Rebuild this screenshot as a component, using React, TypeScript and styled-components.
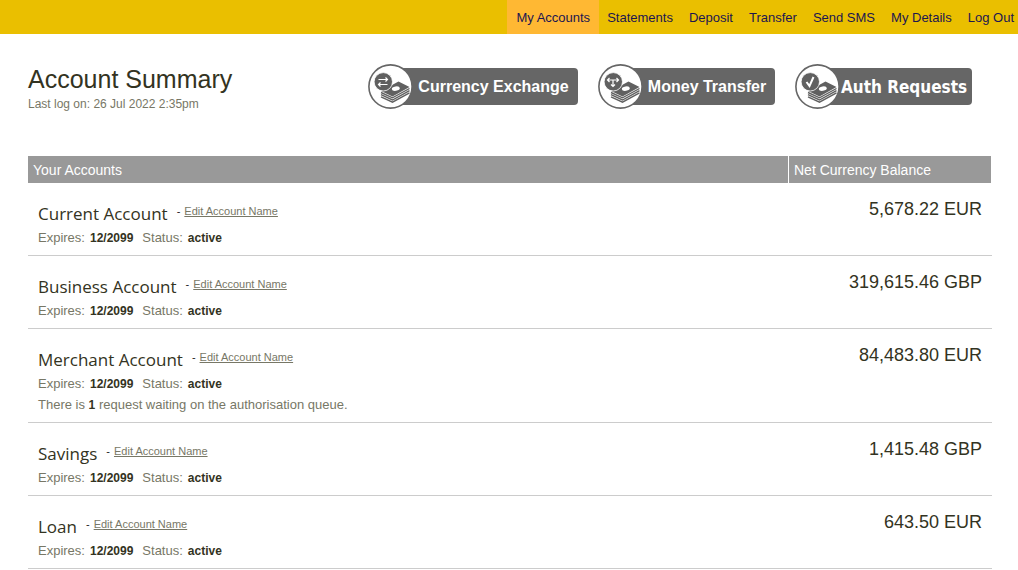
import React from 'react';
import styled, { createGlobalStyle } from 'styled-components';

const GlobalStyle = createGlobalStyle`
  * { box-sizing: border-box; }
  body {
    margin: 0;
    background: #fff;
    color: #333322;
    font-family: "Liberation Sans", Arial, sans-serif;
    font-size: 13px;
  }
`;

const NavBar = styled.nav`
  display: flex;
  justify-content: flex-end;
  height: 34px;
  padding-right: 4px;
  background: #eabf00;
`;

const NavLink = styled.a<{ $active?: boolean; $last?: boolean }>`
  display: flex;
  align-items: center;
  padding: 0 ${p => (p.$last ? 0 : p.$active ? 9 : 8)}px 0 ${p => (p.$active ? 9 : 8)}px;
  background: ${p => (p.$active ? '#ffb833' : 'transparent')};
  color: #1c1650;
  font-size: 13px;
  text-decoration: none;
  white-space: nowrap;
`;

const Main = styled.main`
  padding: 0 26px 0 28px;
`;

const Header = styled.header`
  display: flex;
  justify-content: space-between;
  align-items: flex-start;
  height: 122px;
  padding: 30px 20px 0 0;
`;

const Title = styled.h1`
  margin: 0;
  font-size: 25px;
  font-weight: 400;
  line-height: 30px;
`;

const LastLog = styled.p`
  margin: 2px 0 0;
  color: #777766;
  font-size: 12px;
  line-height: 16px;
`;

const Actions = styled.div`
  display: flex;
  gap: 20px;
  padding-top: 4px;
`;

const ActionButton = styled.button<{ $wide?: boolean }>`
  display: flex;
  align-items: center;
  width: ${p => (p.$wide ? 210 : 177)}px;
  height: 37px;
  padding: 0;
  border: 0;
  border-radius: 4px;
  background: linear-gradient(to right, transparent 26px, #666 26px);
  color: #fff;
  cursor: pointer;
`;

const ActionIcon = styled.svg`
  flex: none;
  width: 45px;
  height: 45px;
`;

const ActionLabel = styled.span<{ $condensed?: boolean }>`
  flex: 1;
  padding-right: 4px;
  font-family: ${p => (p.$condensed ? '"DejaVu Sans Condensed", "DejaVu Sans", sans-serif' : '"Liberation Sans", Arial, sans-serif')};
  font-size: ${p => (p.$condensed ? 17 : 16)}px;
  font-weight: 700;
  line-height: 20px;
  white-space: nowrap;
`;

const Table = styled.table`
  width: 100%;
  border-collapse: separate;
  border-spacing: 0;
`;

const HeadCell = styled.th<{ $balance?: boolean }>`
  width: ${p => (p.$balance ? '204px' : 'auto')};
  height: 27px;
  padding: 0 5px;
  border: solid #fff;
  border-width: ${p => (p.$balance ? '0 1px' : '0')};
  background: #999;
  color: #fff;
  font-size: 14px;
  font-weight: 400;
  line-height: 16px;
  text-align: left;
`;

const AccountCell = styled.td`
  padding: 18px 10px 7px;
  border-bottom: 1px solid #ccc;
  color: #777766;
  vertical-align: top;
`;

const BalanceCell = styled.td`
  padding: 14px 10px 0;
  border-bottom: 1px solid #ccc;
  font-size: 18px;
  line-height: 24px;
  text-align: right;
  vertical-align: top;
`;

const NameLine = styled.div`
  display: flex;
  gap: 9px;
  height: 26px;
`;

const AccountName = styled.h2`
  margin: 0;
  color: #333322;
  font-family: "Open Sans", Tahoma, sans-serif;
  font-size: 17px;
  font-weight: 400;
  line-height: 26px;
`;

const EditPart = styled.span`
  display: flex;
  gap: 4px;
  color: #222;
  font-size: 11px;
  line-height: 20px;
`;

const EditLink = styled.a`
  color: #777766;
  text-decoration: underline;
`;

const Details = styled.div`
  display: flex;
  gap: 9px;
  height: 21px;
  font-size: 13px;
  line-height: 21px;
`;

const Pair = styled.span`
  display: flex;
  align-items: baseline;
  gap: 5px;
`;

const Notice = styled.p`
  margin: 0;
  font-size: 13px;
  line-height: 21px;
`;

const Value = styled.strong`
  color: #333322;
  font-size: 12px;
  line-height: 16px;
`;

const navItems = ['My Accounts', 'Statements', 'Deposit', 'Transfer', 'Send SMS', 'My Details', 'Log Out'];

const accounts = [
  { name: 'Current Account', balance: '5,678.22 EUR', requests: 0 },
  { name: 'Business Account', balance: '319,615.46 GBP', requests: 0 },
  { name: 'Merchant Account', balance: '84,483.80 EUR', requests: 1 },
  { name: 'Savings', balance: '1,415.48 GBP', requests: 0 },
  { name: 'Loan', balance: '643.50 EUR', requests: 0 },
];

const badgeMarks = {
  exchange: <path d="M10.500 15.500h9M17.500 13.500l2 2-2 2M19.500 20.500h-9M12.500 18.500l-2 2 2 2" />,
  transfer: <path d="M9.500 16h11M11.500 14l-2 2 2 2M18.500 14l2 2-2 2M15 16v6.500M13 20.500l2 2 2-2" />,
  check: <path d="M11.500 18l3 4 4-9" strokeWidth="2" />,
};

function MoneyIcon({ mark }: { mark: keyof typeof badgeMarks }) {
  return (
    <ActionIcon viewBox="0 0 45 45" aria-hidden="true">
      <circle cx="22.5" cy="22.5" r="21.6" fill="#fff" stroke="#666" strokeWidth="1.6" />
      <path d="M13 27L30.500 17.500l11 5.500L24.500 32.500z" fill="#606060" />
      <ellipse cx="27.800" cy="24.600" rx="4" ry="2.200" fill="#fff" transform="rotate(-8 28 24.500)" />
      <path
        d="M13 28.500l11.500 5.300L41.500 24.500M13 30.700l11.500 5.300L41.500 26.700M13 32.900l11.500 5.300L41.500 28.900"
        fill="none"
        stroke="#606060"
        strokeWidth="1.400"
      />
      <circle cx="15.300" cy="17.800" r="9.200" fill="#606060" stroke="#fff" strokeWidth="0.800" />
      <g fill="none" stroke="#fff" strokeWidth="1.200">{badgeMarks[mark]}</g>
    </ActionIcon>
  );
}

export default function App() {
  return (
    <>
      <GlobalStyle />
      <NavBar>
        {navItems.map((item, i) => (
          <NavLink key={item} href="#" $active={i === 0} $last={i === navItems.length - 1}>
            {item}
          </NavLink>
        ))}
      </NavBar>
      <Main>
        <Header>
          <div>
            <Title>Account Summary</Title>
            <LastLog>Last log on: 26 Jul 2022 2:35pm</LastLog>
          </div>
          <Actions>
            <ActionButton type="button" $wide>
              <MoneyIcon mark="exchange" />
              <ActionLabel>Currency Exchange</ActionLabel>
            </ActionButton>
            <ActionButton type="button">
              <MoneyIcon mark="transfer" />
              <ActionLabel>Money Transfer</ActionLabel>
            </ActionButton>
            <ActionButton type="button">
              <MoneyIcon mark="check" />
              <ActionLabel $condensed>Auth Requests</ActionLabel>
            </ActionButton>
          </Actions>
        </Header>
        <Table>
          <thead>
            <tr>
              <HeadCell scope="col">Your Accounts</HeadCell>
              <HeadCell scope="col" $balance>Net Currency Balance</HeadCell>
            </tr>
          </thead>
          <tbody>
            {accounts.map(({ name, balance, requests }) => (
              <tr key={name}>
                <AccountCell>
                  <NameLine>
                    <AccountName>{name}</AccountName>
                    <EditPart>
                      <span>-</span>
                      <EditLink href="#">Edit Account Name</EditLink>
                    </EditPart>
                  </NameLine>
                  <Details>
                    <Pair>Expires: <Value>12/2099</Value></Pair>
                    <Pair>Status: <Value>active</Value></Pair>
                  </Details>
                  {requests > 0 && (
                    <Notice>
                      There is <Value>{requests}</Value> request waiting on the authorisation queue.
                    </Notice>
                  )}
                </AccountCell>
                <BalanceCell>{balance}</BalanceCell>
              </tr>
            ))}
          </tbody>
        </Table>
      </Main>
    </>
  );
}
